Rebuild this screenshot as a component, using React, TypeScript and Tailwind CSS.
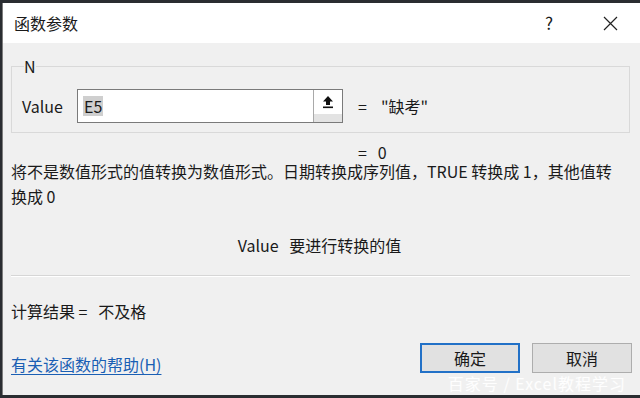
import React from "react";

const font = "font-['Noto_Sans_CJK_SC','Noto_Sans',sans-serif]";

function UpArrow() {
  return (
    <svg width="12" height="14" viewBox="0 0 12 14">
      <path d="M6 1 L11 6.5 H8 V10 H4 V6.5 H1 Z" fill="#111" />
      <rect x="1" y="11.5" width="10" height="1.6" fill="#111" />
    </svg>
  );
}

export default function App() {
  return (
    <div className={`w-[640px] h-[398px] bg-[#2a2d31] pt-[3px] pl-[2px] pb-[3px] overflow-hidden ${font}`}>
      <div className="h-[392px] w-[638px] flex flex-col overflow-hidden border-l border-[#7d7d7d] bg-[#f0f0f0] text-[#1a1a1a] text-[16px]">
        {/* title bar */}
        <div className="h-[40px] shrink-0 bg-white flex items-center pl-[11px] pr-[22px]">
          <span className="text-[16px]">函数参数</span>
          <span className="ml-auto text-[17px] mr-[50px]">?</span>
          <svg width="15" height="15" viewBox="0 0 15 15">
            <path d="M1 1 L14 14 M14 1 L1 14" stroke="#222" strokeWidth="1.2" />
          </svg>
        </div>

        <div className="flex-1 flex flex-col px-[8px] pt-[12px]">
          <fieldset className="border border-[#d9d9d9] h-[78px] px-[10px] mr-[2px]">
            <legend className="ml-[2px] leading-[22px] text-[16px]">N</legend>
            <div className="flex items-center mt-[12px]">
              <span className="w-[55px] leading-[20px]">Value</span>
              <div className="flex h-[34px] w-[266px] border border-[#7a7a7a] bg-white">
                <div className="flex-1 flex items-center pl-[5px]">
                  <span className="bg-[#cfcfcf] leading-[20px] px-[1px]">E5</span>
                </div>
                <div className="w-[29px] border-l border-[#a9a9a9] flex flex-col">
                  <div className="flex-1 bg-white flex items-center justify-center">
                    <UpArrow />
                  </div>
                  <div className="h-[8px] bg-[#e3e3e3]" />
                </div>
              </div>
              <span className="ml-[15px]">=</span>
              <span className="ml-[14px]">"缺考"</span>
            </div>
          </fieldset>

          <div className="pl-[347px] mt-[12px] leading-[14px]">=&nbsp;&nbsp;&nbsp;0</div>
          <p className="mt-[0px] leading-[25px] pr-[12px]">
            将不是数值形式的值转换为数值形式。日期转换成序列值，TRUE 转换成 1，其他值转换成 0
          </p>
          <div className="mt-[25px] text-center pr-[4px] leading-[22px]">
            Value&nbsp;&nbsp;&nbsp;要进行转换的值
          </div>

          <div className="mt-[19px] mr-[2px] h-[2px] shrink-0 border-t border-[#d6d6d6] border-b border-b-white" />

          <div className="mt-[23px] leading-[22px]">计算结果 =&nbsp;&nbsp;&nbsp;不及格</div>

          <div className="mt-[21px] flex items-start">
            <a className="mt-[10px] text-[#1a5fb4] underline underline-offset-[3px] leading-[22px]">
              有关该函数的帮助(H)
            </a>
            <div className="ml-auto flex gap-[12px]">
              <button className="w-[100px] h-[30px] border-2 border-[#2271c7] bg-[#e1e1e1] text-[16px]">
                确定
              </button>
              <button className="w-[100px] h-[30px] border border-[#adadad] bg-[#e1e1e1] text-[16px]">
                取消
              </button>
            </div>
          </div>
          <div className="self-end mr-[6px] text-white/90 text-[16px] leading-[16px] tracking-[1px]">
            百家号 / Excel教程学习
          </div>
        </div>
      </div>
    </div>
  );
}
